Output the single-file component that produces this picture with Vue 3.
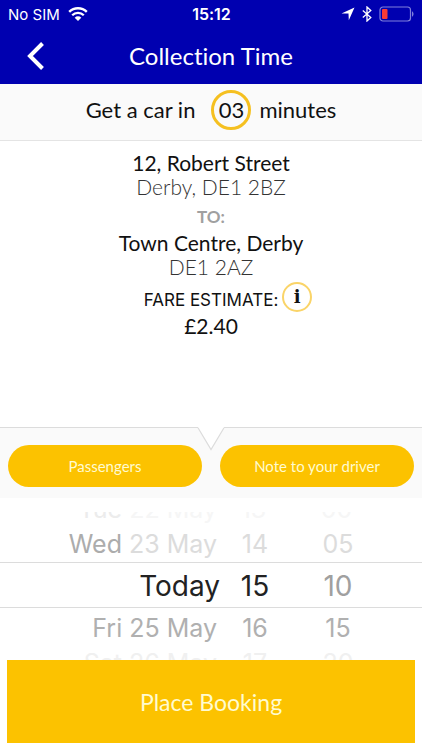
<script setup>
import { ref } from 'vue'

const minutesAway = ref('03')

const columns = [
  {
    name: 'date',
    label: 'Date',
    values: [
      { strong: 'Tue', text: ' 22 May' },
      { strong: 'Wed', text: ' 23 May' },
      { text: 'Today' },
      { text: 'Fri 25 May' },
      { text: 'Sat 26 May' },
    ],
  },
  {
    name: 'hour',
    label: 'Hour',
    values: [{ text: '13' }, { text: '14' }, { text: '15' }, { text: '16' }, { text: '17' }],
  },
  {
    name: 'minute',
    label: 'Minute',
    values: [{ text: '00' }, { text: '05' }, { text: '10' }, { text: '15' }, { text: '20' }],
  },
]

const rowNames = ['edge-top', 'before', 'selected', 'after', 'edge-bottom']
</script>

<template>
  <div class="screen">
    <header class="header">
      <div class="status">
        <div class="carrier">
          <span>No SIM</span>
          <svg class="wifi" viewBox="0 0 20 14" aria-hidden="true">
            <path d="M1.2 4.9a12.6 12.6 0 0 1 17.6 0" fill="none" stroke="#fff" stroke-width="2.4" />
            <path d="M4.2 8.2a8.3 8.3 0 0 1 11.6 0" fill="none" stroke="#fff" stroke-width="2.3" />
            <path d="M10 14 6.7 10.7a4.7 4.7 0 0 1 6.6 0z" fill="#fff" />
          </svg>
        </div>
        <time class="clock">15:12</time>
        <div class="indicators">
          <svg class="location" viewBox="0 0 14 14" aria-hidden="true">
            <path d="M13.5.5 7.8 13.2 7.5 6.6.5 6.4z" fill="#fff" />
          </svg>
          <svg class="bluetooth" viewBox="0 0 10 16" aria-hidden="true">
            <path d="M.8 4.4 8.8 11.4 5 15V1l3.8 3.6-8 7" fill="none" stroke="#fff" stroke-width="1.3" />
          </svg>
          <svg class="battery" viewBox="0 0 36 16" aria-hidden="true">
            <rect x="1" y="1" width="30.5" height="14" rx="3" fill="none" stroke="#8080dc" stroke-width="1.2" />
            <rect x="3" y="3" width="5.5" height="10" rx="1" fill="#fb3b37" />
            <path d="M33 5.3c2 1 2 4.400 0 5.400z" fill="#8080dc" />
          </svg>
        </div>
      </div>
      <nav class="nav">
        <button class="back" type="button" aria-label="Back">
          <svg viewBox="0 0 18 28" aria-hidden="true">
            <path d="M15.500 1.500 3 14l12.500 12.500" fill="none" stroke="#fff" stroke-width="4" />
          </svg>
        </button>
        <h1 class="title">Collection Time</h1>
      </nav>
    </header>

    <section class="eta">
      <span>Get a car in</span>
      <span class="eta-count">{{ minutesAway }}</span>
      <span>minutes</span>
    </section>

    <main class="trip">
      <p class="place">12, Robert Street</p>
      <p class="area">Derby, DE1 2BZ</p>
      <p class="to">TO:</p>
      <p class="place">Town Centre, Derby</p>
      <p class="area">DE1 2AZ</p>
      <div class="fare">
        <span class="fare-label">FARE ESTIMATE:</span>
        <button class="info" type="button" aria-label="Fare information">i</button>
      </div>
      <p class="place">£2.40</p>
    </main>

    <section class="options">
      <svg class="notch" viewBox="0 0 28 24" aria-hidden="true">
        <path d="M0 0H28V1H27.500L14 23 .5 1H0z" fill="#fff" />
        <path d="M0 .5H.8L14 22.500 27.200.5H28" fill="none" stroke="#dcdcdc" stroke-width="1.200" />
        <path d="M1.500 0H26.500V1H1.500z" fill="#fff" />
      </svg>
      <button class="pill" type="button">Passengers</button>
      <button class="pill" type="button">Note to your driver</button>
    </section>

    <section class="picker">
      <div
        v-for="column in columns"
        :key="column.name"
        class="column"
        :class="column.name"
        role="group"
        :aria-label="column.label"
      >
        <button
          v-for="(value, i) in column.values"
          :key="i"
          type="button"
          class="row"
          :class="rowNames[i]"
        >
          <span class="value"><span v-if="value.strong" class="weekday">{{ value.strong }}</span>{{ value.text }}</span>
        </button>
      </div>
      <div class="column rest" aria-hidden="true">
        <span v-for="name in rowNames" :key="name" class="row" :class="name"></span>
      </div>
    </section>

    <footer class="footer">
      <button class="book" type="button">Place Booking</button>
    </footer>
  </div>
</template>

<style>
body {
  margin: 0;
  background: #fff;
}
</style>

<style scoped>
.screen {
  display: flex;
  flex-direction: column;
  min-height: 100vh;
  font-family: Lato, 'Liberation Sans', sans-serif;
  font-variant-ligatures: none;
  color: #111;
}

button {
  margin: 0;
  padding: 0;
  border: 0;
  background: none;
  font: inherit;
  color: inherit;
  cursor: pointer;
}

h1,
p {
  margin: 0;
}

svg {
  display: block;
}

.header {
  background: #0000b0;
  color: #fff;
}

.status {
  display: grid;
  grid-template-columns: 1fr auto 1fr;
  align-items: center;
  height: 28px;
  padding: 0 7px 0 8px;
  font-family: Inter, sans-serif;
  font-size: 15px;
}

.carrier {
  display: flex;
  align-items: center;
  gap: 8px;
}

.wifi {
  width: 20px;
  height: 14px;
}

.clock {
  font-size: 16px;
  font-weight: 600;
}

.indicators {
  display: flex;
  align-items: center;
  justify-content: flex-end;
  gap: 7px;
}

.location {
  width: 14px;
  height: 14px;
}

.bluetooth {
  width: 10px;
  height: 16px;
}

.battery {
  width: 36px;
  height: 16px;
}

.nav {
  display: grid;
  grid-template-columns: 56px 1fr 56px;
  align-items: center;
  height: 56px;
}

.back {
  display: flex;
  justify-content: flex-end;
  padding-right: 11px;
}

.back svg {
  width: 18px;
  height: 28px;
}

.title {
  text-align: center;
  font-size: 24px;
  font-weight: 400;
  line-height: 28px;
}

.eta {
  display: flex;
  justify-content: center;
  align-items: center;
  gap: 8px;
  height: 57px;
  padding-bottom: 5px;
  box-sizing: border-box;
  border-bottom: 1px solid #e4e4e4;
  background: #fafafa;
  font-size: 22px;
}

.eta-count {
  display: flex;
  justify-content: center;
  align-items: center;
  width: 40px;
  height: 40px;
  margin-left: 8px;
  box-sizing: border-box;
  border: 3px solid #f5c020;
  border-radius: 50%;
}

.trip {
  flex: 1;
  display: flex;
  flex-direction: column;
  align-items: center;
  padding-top: 10px;
  text-align: center;
}

.place {
  font-size: 21px;
  line-height: 24px;
}

.area {
  font-size: 21px;
  font-weight: 300;
  line-height: 24px;
  color: #333;
}

.to {
  padding-top: 4px;
  font-size: 17px;
  font-weight: 700;
  line-height: 28px;
  color: #a0a0a0;
}

.fare {
  display: flex;
  align-items: center;
  gap: 4px;
  margin: 3px 0 2px 34px;
  font-family: Inter, sans-serif;
  font-size: 17px;
}

.fare-label {
  padding-top: 6px;
}

.info {
  width: 30px;
  height: 30px;
  border: 2px solid #fad468;
  border-radius: 50%;
  font-family: 'DejaVu Serif', serif;
  font-size: 18px;
  font-weight: 700;
  line-height: 24px;
}

.options {
  position: relative;
  display: grid;
  grid-template-columns: 1fr 1fr;
  gap: 18px;
  padding: 17px 8px 11px;
  border-top: 1px solid #dcdcdc;
  background: #fafafa;
}

.notch {
  position: absolute;
  top: -1px;
  left: calc(50% - 14px);
  width: 28px;
  height: 24px;
}

.pill {
  height: 42px;
  border-radius: 21px;
  background: #fcc200;
  color: #fffbd0;
  font-size: 15px;
}

.picker {
  display: grid;
  grid-template-columns: 220fr 70fr 96fr 36fr;
  padding-top: 14px;
  font-family: Inter, sans-serif;
  font-size: 25px;
  line-height: 30px;
  color: #b0b0b0;
}

.column {
  display: flex;
  flex-direction: column;
}

.row {
  display: flex;
  justify-content: center;
  align-items: center;
  height: 38px;
  padding-top: 2px;
  box-sizing: border-box;
  overflow: hidden;
  white-space: pre;
}

.date .row {
  justify-content: flex-end;
  padding-right: 3px;
}

.row.edge-top {
  height: 12px;
  padding: 0 3px 0 0;
  align-items: flex-end;
  color: #f6f6f6;
}

.row.edge-bottom {
  height: 14px;
  align-items: flex-start;
  color: #f0f0f0;
}

.row.before {
  color: #dcdcdc;
}

.before .weekday {
  color: #acacac;
}

.edge-top .weekday {
  color: #ececec;
}

.row.selected {
  height: 46px;
  border-top: 1px solid #dcdcdc;
  border-bottom: 1px solid #dcdcdc;
  font-size: 28px;
  color: #222;
}

.date .row.selected {
  padding-right: 0;
}

.minute .row.selected {
  color: #a0a0a0;
}

.footer {
  padding: 0 7px 7px;
}

.book {
  display: block;
  width: 100%;
  height: 83px;
  background: #fcc200;
  color: #fffbd0;
  font-size: 23px;
}
</style>
